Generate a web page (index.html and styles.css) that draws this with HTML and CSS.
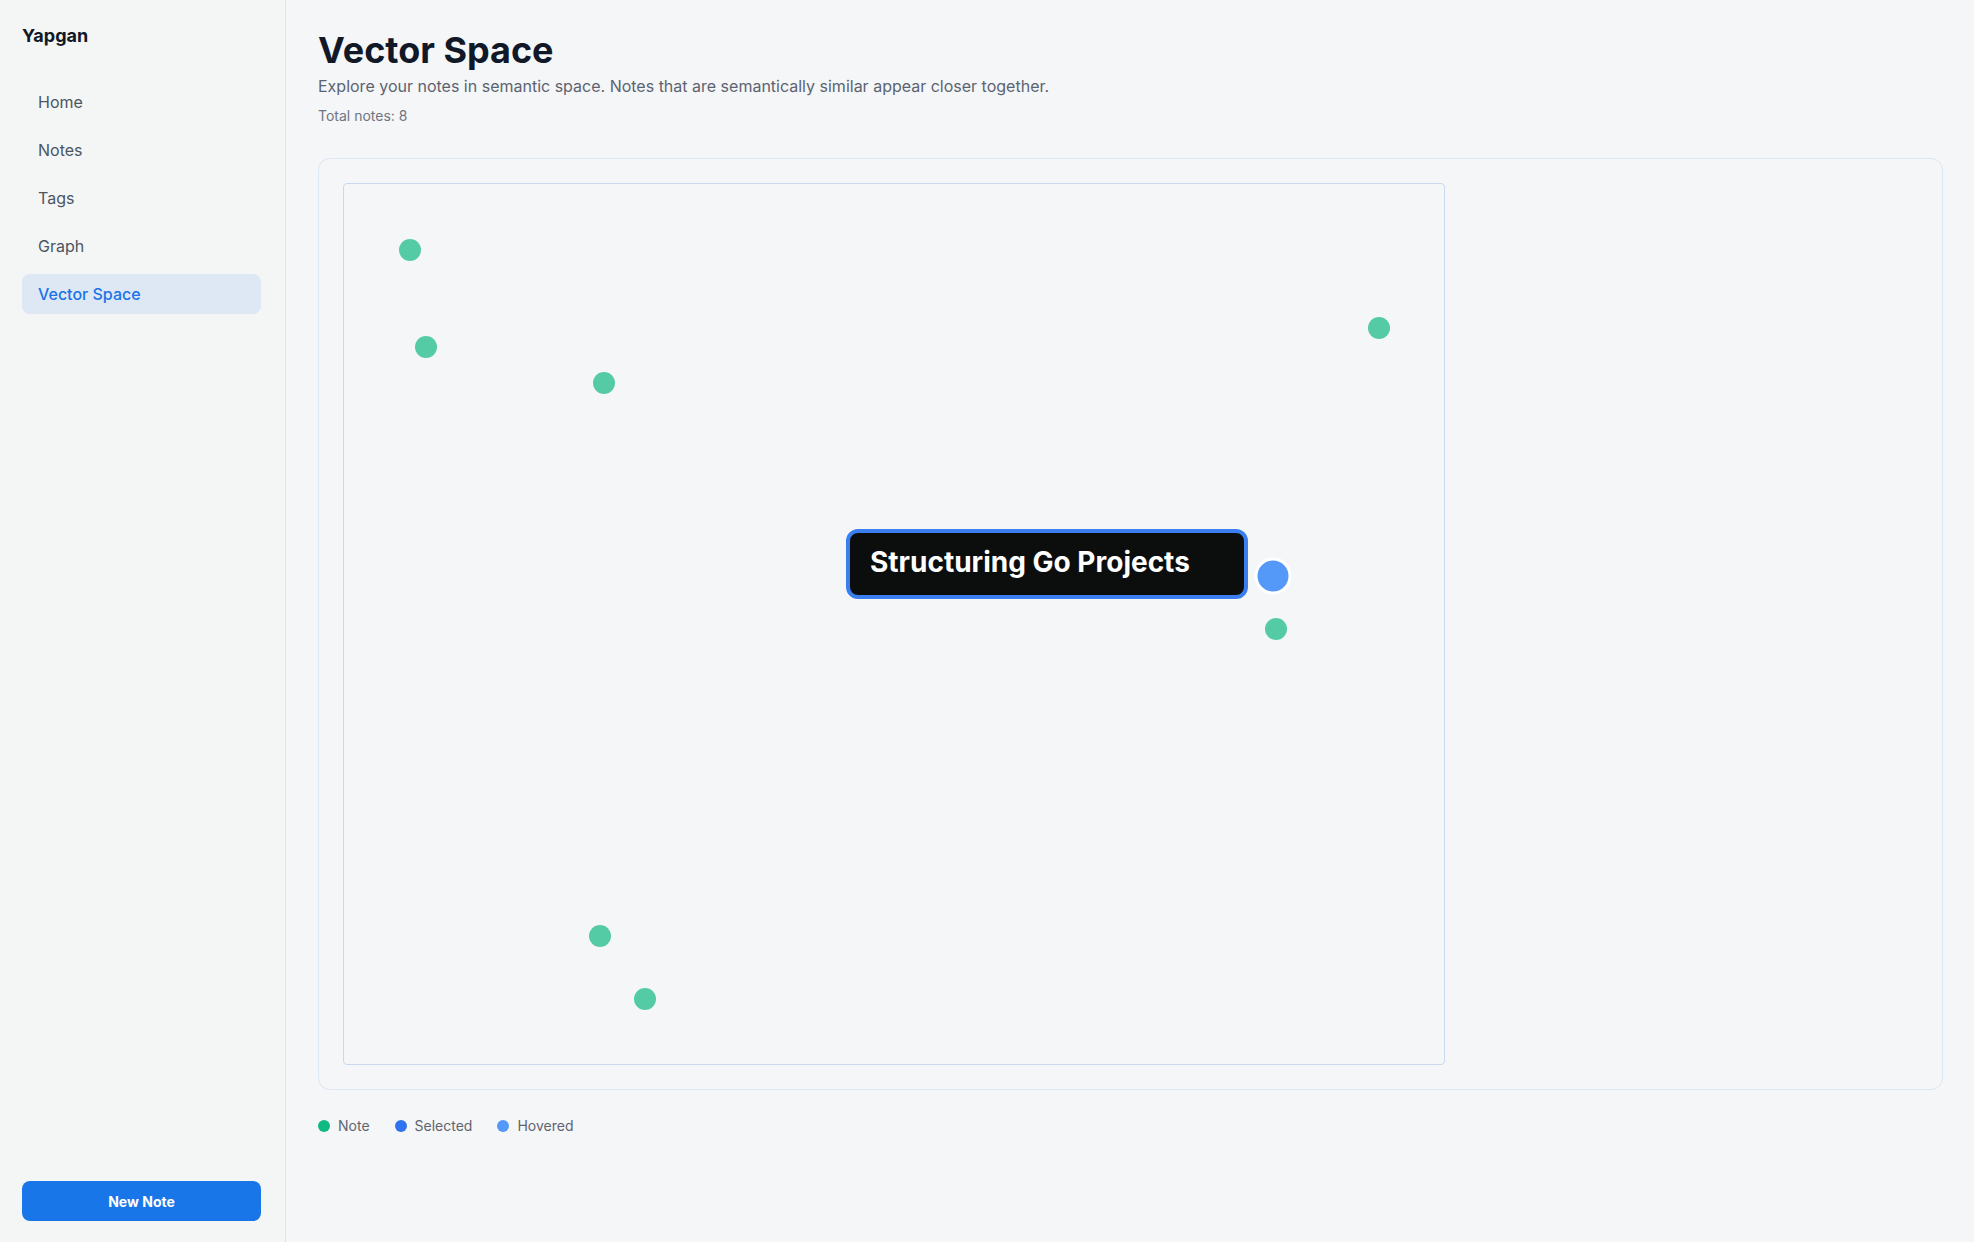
FILE: index.html
```html
<!DOCTYPE html>
<html lang="en">
<head>
<meta charset="utf-8">
<title>Yapgan – Vector Space</title>
<link rel="stylesheet" href="styles.css">
</head>
<body>
<div class="app">
  <aside class="sidebar">
    <div class="brand">Yapgan</div>
    <nav class="nav">
      <a class="nav-item">Home</a>
      <a class="nav-item">Notes</a>
      <a class="nav-item">Tags</a>
      <a class="nav-item">Graph</a>
      <a class="nav-item active">Vector Space</a>
    </nav>
    <button class="new-note">New Note</button>
  </aside>
  <main class="main">
    <h1 class="title">Vector Space</h1>
    <p class="subtitle">Explore your notes in semantic space. Notes that are semantically similar appear closer together.</p>
    <p class="count">Total notes: 8</p>
    <section class="card">
      <div class="canvas">
        <svg class="plot" width="1100" height="880" viewBox="0 0 1100 880">
          <circle class="pt" cx="66" cy="66" r="11"/>
          <circle class="pt" cx="82" cy="163" r="11"/>
          <circle class="pt" cx="260" cy="199" r="11"/>
          <circle class="pt" cx="1035" cy="144" r="11"/>
          <circle class="pt" cx="932" cy="445" r="11"/>
          <circle class="pt" cx="256" cy="752" r="11"/>
          <circle class="pt" cx="301" cy="815" r="11"/>
          <circle class="pt hover" cx="929" cy="392" r="17"/>
        </svg>
        <div class="tooltip">Structuring Go Projects</div>
      </div>
    </section>
    <div class="legend">
      <span class="legend-item"><i class="dot dot-note"></i>Note</span>
      <span class="legend-item"><i class="dot dot-selected"></i>Selected</span>
      <span class="legend-item"><i class="dot dot-hovered"></i>Hovered</span>
    </div>
  </main>
</div>
</body>
</html>
```

FILE: styles.css
```css
* { box-sizing: border-box; }
html, body { margin: 0; padding: 0; }
body {
  font-family: Inter, "Noto Sans", "Liberation Sans", sans-serif;
  background: #f4f6f8;
  color: #111827;
}
.app {
  display: flex;
  height: 1242px;
}
.sidebar {
  width: 286px;
  flex: none;
  background: #f4f5f5;
  border-right: 1px solid #d9e4f0;
  padding: 22px 24px 21px 22px;
  display: flex;
  flex-direction: column;
}
.brand {
  font-size: 18px;
  font-weight: 700;
  line-height: 28px;
  color: #111827;
}
.nav {
  margin-top: 32px;
  display: flex;
  flex-direction: column;
  gap: 8px;
}
.nav-item {
  display: block;
  height: 40px;
  line-height: 40px;
  padding: 0 16px;
  border-radius: 8px;
  font-size: 16px;
  color: #4b5563;
}
.nav-item.active {
  background: #dde8f4;
  color: #1a73e8;
  font-weight: 500;
}
.new-note {
  margin-top: auto;
  height: 40px;
  width: 100%;
  border: none;
  border-radius: 8px;
  background: #1876e8;
  color: #fff;
  font-family: inherit;
  font-size: 14px;
  font-weight: 700;
}
.main {
  flex: 1;
  padding: 30px 31px 32px 32px;
}
.title {
  margin: 0;
  font-size: 36px;
  line-height: 40px;
  font-weight: 700;
  color: #111827;
}
.subtitle {
  margin: 4px 0 0;
  font-size: 16px;
  line-height: 24px;
  color: #5c6370;
}
.count {
  margin: 8px 0 0;
  font-size: 14px;
  line-height: 20px;
  color: #6f7580;
}
.card {
  margin-top: 32px;
  border: 1px solid #dce7f3;
  border-radius: 12px;
  padding: 24px;
}
.canvas {
  position: relative;
  width: 1102px;
  height: 882px;
  border: 1px solid #c9daef;
  border-radius: 4px;
}
.plot { display: block; }
.pt { fill: #10b981; fill-opacity: 0.7; }
.pt.hover { fill: #5599f8; fill-opacity: 1; stroke: #fff; stroke-width: 3; }
.tooltip {
  position: absolute;
  left: 502px;
  top: 345px;
  width: 402px;
  height: 70px;
  border: 4px solid #3a7ef0;
  border-radius: 12px;
  background: #0c0e0e;
  color: #fff;
  font-size: 28px;
  font-weight: 700;
  line-height: 58px;
  padding-left: 20px;
  white-space: nowrap;
}
.legend {
  margin-top: 26px;
  display: flex;
  gap: 25px;
  font-size: 14px;
  line-height: 20px;
  color: #5f6570;
}
.legend-item {
  display: flex;
  align-items: center;
  gap: 8px;
}
.dot {
  width: 12px;
  height: 12px;
  border-radius: 50%;
  display: inline-block;
}
.dot-note { background: #10b981; }
.dot-selected { background: #2f74ee; }
.dot-hovered { background: #5599f8; }
```
